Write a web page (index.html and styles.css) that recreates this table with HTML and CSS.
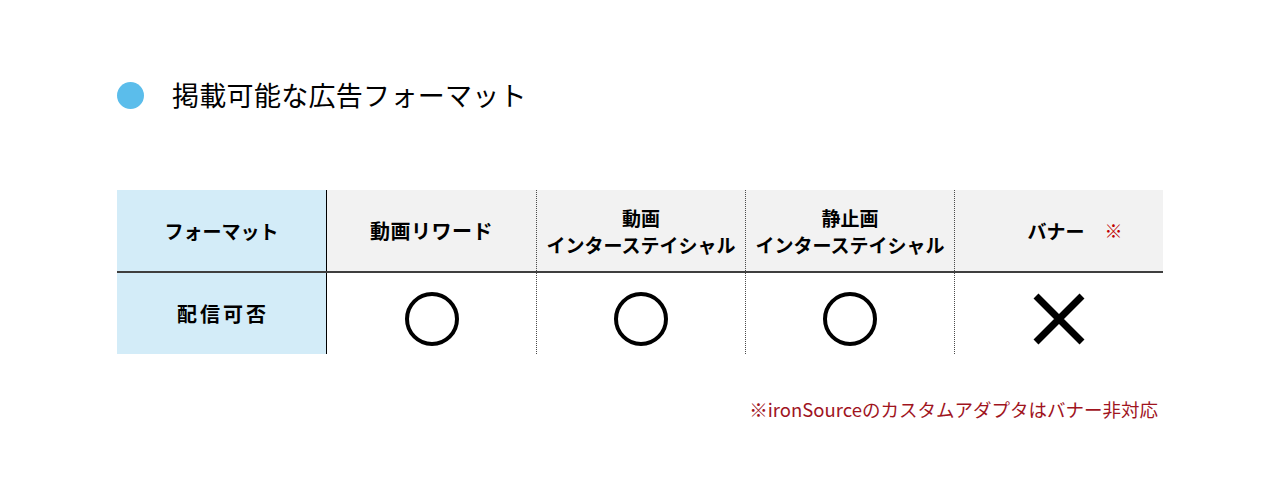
FILE: index.html
```html
<!DOCTYPE html>
<html lang="ja">
<head>
<meta charset="utf-8">
<link rel="stylesheet" href="styles.css">
</head>
<body>
<div class="page">
  <div class="title-row">
    <span class="bullet"></span>
    <h1 class="title">掲載可能な広告フォーマット</h1>
  </div>
  <div class="table">
    <div class="cell label head">フォーマット</div>
    <div class="cell head col wide">動画リワード</div>
    <div class="cell head col dotted">動画<br>インターステイシャル</div>
    <div class="cell head col dotted">静止画<br>インターステイシャル</div>
    <div class="cell head col dotted banner">バナー<span class="mark">※</span></div>
    <div class="cell label body">配信可否</div>
    <div class="cell body col"><svg class="sym" width="56" height="56" viewBox="0 0 56 56"><circle cx="28" cy="28" r="25" fill="none" stroke="#000" stroke-width="4"/></svg></div>
    <div class="cell body col dotted"><svg class="sym" width="56" height="56" viewBox="0 0 56 56"><circle cx="28" cy="28" r="25" fill="none" stroke="#000" stroke-width="4"/></svg></div>
    <div class="cell body col dotted"><svg class="sym" width="56" height="56" viewBox="0 0 56 56"><circle cx="28" cy="28" r="25" fill="none" stroke="#000" stroke-width="4"/></svg></div>
    <div class="cell body col dotted"><svg class="sym" width="56" height="56" viewBox="0 0 56 56"><path d="M5 5 L51 51 M51 5 L5 51" fill="none" stroke="#000" stroke-width="7"/></svg></div>
  </div>
  <p class="note">※ironSourceのカスタムアダプタはバナー非対応</p>
</div>
</body>
</html>
```
FILE: styles.css
```css
html, body {
  margin: 0;
  padding: 0;
  background: #ffffff;
}
body {
  font-family: "Noto Sans CJK JP", "Noto Sans", sans-serif;
  color: #000;
}
.page {
  width: 1280px;
  height: 500px;
  padding: 76px 0 0 117px;
  box-sizing: border-box;
}
.title-row {
  display: flex;
  align-items: center;
  height: 38px;
}
.bullet {
  width: 27px;
  height: 27px;
  border-radius: 50%;
  background: #5bbdeb;
  flex: none;
}
.title {
  margin: 0 0 0 28px;
  font-size: 27px;
  font-weight: 400;
  line-height: 38px;
  letter-spacing: 0.3px;
}
.table {
  margin-top: 76px;
  display: grid;
  grid-template-columns: 210px repeat(4, 209px);
  grid-template-rows: 81px 2px 81px;
  width: 1046px;
}
.cell {
  display: flex;
  align-items: center;
  justify-content: center;
  text-align: center;
  font-weight: 700;
  font-size: 19px;
  line-height: 27px;
  box-sizing: border-box;
}
.wide {
  font-size: 20px;
  letter-spacing: 0.5px;
}
.label {
  background: #d3ecf8;
  border-right: 1px solid #000;
}
.head {
  grid-row: 1;
}
.head.col {
  background: #f2f2f2;
}
.body {
  grid-row: 3;
}
.body.label {
  letter-spacing: 3px;
  font-size: 20px;
  padding-left: 3px;
}
.table::before {
  content: "";
  grid-row: 2;
  grid-column: 1 / -1;
  background: #3f3f3f;
}
.dotted {
  border-left: 1px dotted #4a4a4a;
}
.banner {
  padding-left: 32px;
}
.mark {
  color: #c00000;
  font-weight: 400;
  margin-left: 20px;
  font-size: 18px;
}
.sym {
  display: block;
  margin-top: 10px;
}
.note {
  margin: 43px 0 0 0;
  width: 1041px;
  text-align: right;
  color: #a0141e;
  font-size: 18.5px;
  line-height: 24px;
}
```
